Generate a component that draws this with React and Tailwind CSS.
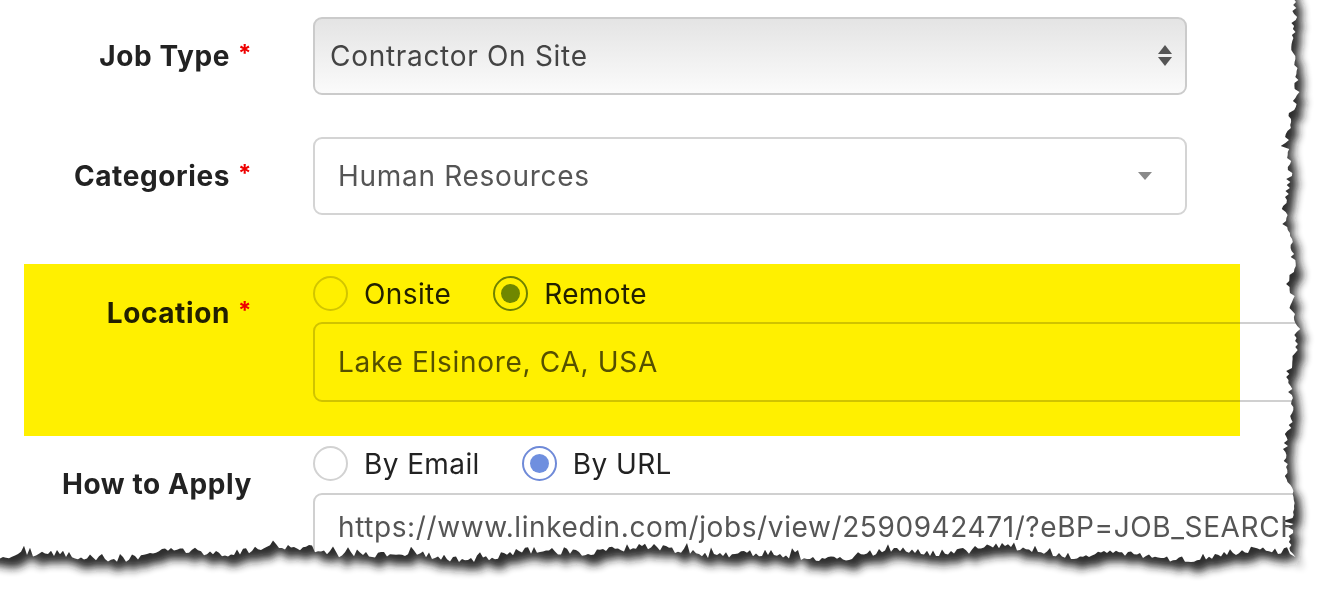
import { useMemo } from 'react'

// torn paper edge — deterministic noise so every render matches
function makeRand(seed) {
  let s = seed
  return () => {
    s = (s * 16807) % 2147483647
    return s / 2147483647
  }
}

function tornPath() {
  const r = makeRand(7)
  const pts = []
  pts.push([-40, -40])
  for (let y = -40; y <= 558; y += 3) {
    const x = 1291 + 4 * Math.sin(y / 41) + 2.5 * Math.sin(y / 13 + 1) + (r() - 0.5) * 6 + (r() > 0.93 ? -6 : 0)
    pts.push([x, y])
  }
  for (let x = 1290; x >= -40; x -= 3) {
    const y = 553 + 4 * Math.sin(x / 57) + 3 * Math.sin(x / 19 + 2) + (r() - 0.5) * 7 + (r() > 0.92 ? -6 : 0)
    pts.push([x, y])
  }
  return 'M' + pts.map(([x, y]) => `${x.toFixed(1)} ${y.toFixed(1)}`).join(' L') + ' Z'
}

const TornEdge = () => {
  const inner = useMemo(() => tornPath(), [])
  const outer = 'M-60 -60 H1400 V700 H-60 Z ' + inner
  return (
    <svg className="absolute inset-0 pointer-events-none" width="1320" height="592" viewBox="0 0 1320 592">
      <defs>
        <clipPath id="outside">
          <path d={outer} clipRule="evenodd" />
        </clipPath>
        <filter id="blur" x="-10%" y="-10%" width="120%" height="120%">
          <feGaussianBlur stdDeviation="4" />
        </filter>
      </defs>
      <path d={outer} fill="#fff" fillRule="evenodd" />
      <g clipPath="url(#outside)">
        <path d={inner} fill="#1a1a1a" opacity="0.92" transform="translate(7 10)" filter="url(#blur)" />
      </g>
    </svg>
  )
}

const Label = ({ children, required }) => (
  <div className="w-[252px] text-right text-[28px] font-bold text-[#222] tracking-[0.6px] leading-none whitespace-nowrap">
    {children}
    {required && <span className="text-[#e00] ml-[8px] text-[24px] align-top">*</span>}
  </div>
)

const Radio = ({ label, checked }) => (
  <label className="flex items-center gap-[16px]">
    <span className={`w-[35px] h-[35px] rounded-full bg-white flex items-center justify-center border-2 ${checked ? 'border-[#6f8ad8]' : 'border-[#d2d2d2]'}`}>
      {checked && <span className="w-[19px] h-[19px] rounded-full bg-[#6f8fdf]" />}
    </span>
    <span className="text-[28px] text-[#222] tracking-[0.4px] leading-none">{label}</span>
  </label>
)

export default function App() {
  return (
    <div className="relative w-[1320px] h-[592px] overflow-hidden bg-white font-['Inter',sans-serif]">
      <div className="flex flex-col pt-[17px]">
        {/* Job Type */}
        <div className="flex items-center gap-[61px]">
          <Label required>Job Type</Label>
          <div className="w-[874px] h-[78px] rounded-[9px] border-2 border-[#cbcbcb] bg-gradient-to-b from-[#e4e4e4] to-[#fbfbfb] flex items-center justify-between pl-[15px] pr-[12px]">
            <span className="text-[28px] text-[#444] tracking-[0.7px]">Contractor On Site</span>
            <svg width="16" height="24" viewBox="0 0 16 24">
              <path d="M8 1 L15 10 H1 Z" fill="#555" />
              <path d="M1 13 H15 L8 22 Z" fill="#555" />
            </svg>
          </div>
        </div>

        {/* Categories */}
        <div className="flex items-center gap-[61px] mt-[42px]">
          <Label required>Categories</Label>
          <div className="w-[874px] h-[78px] rounded-[9px] border-2 border-[#d4d4d4] bg-white flex items-center justify-between pl-[23px] pr-[32px]">
            <span className="text-[28px] text-[#555] tracking-[0.7px]">Human Resources</span>
            <svg width="16" height="10" viewBox="0 0 16 10">
              <path d="M1 1 H15 L8 9 Z" fill="#8a8a8a" />
            </svg>
          </div>
        </div>

        {/* Location */}
        <div className="flex gap-[61px] mt-[61px]">
          <div className="pt-[23px]">
            <Label required>Location</Label>
          </div>
          <div className="flex flex-col">
            <div className="flex items-center gap-[42px] h-[35px]">
              <Radio label="Onsite" />
              <Radio label="Remote" checked />
            </div>
            <div className="w-[1000px] h-[80px] mt-[11px] rounded-[9px] border-2 border-[#d0d0d0] bg-white flex items-center pl-[23px]">
              <span className="text-[28px] text-[#555] tracking-[0.7px]">Lake Elsinore, CA, USA</span>
            </div>
          </div>
        </div>

        {/* How to Apply */}
        <div className="flex gap-[61px] mt-[44px]">
          <div className="pt-[24px]">
            <Label>How to Apply</Label>
          </div>
          <div className="flex flex-col">
            <div className="flex items-center gap-[42px] h-[35px]">
              <Radio label="By Email" />
              <Radio label="By URL" checked />
            </div>
            <div className="w-[1000px] h-[90px] mt-[12px] rounded-[9px] border-2 border-[#d0d0d0] bg-white flex items-start pt-[18px] pl-[23px] overflow-hidden">
              <span className="text-[28px] text-[#555] tracking-[0.6px] leading-none whitespace-nowrap">https://www.linkedin.com/jobs/view/2590942471/?eBP=JOB_SEARCH</span>
            </div>
          </div>
        </div>
      </div>

      {/* highlighter band over the Location row */}
      <div className="absolute left-[24px] top-[264px] w-[1216px] h-[172px] bg-[#fff000] mix-blend-multiply" />

      <TornEdge />
    </div>
  )
}
